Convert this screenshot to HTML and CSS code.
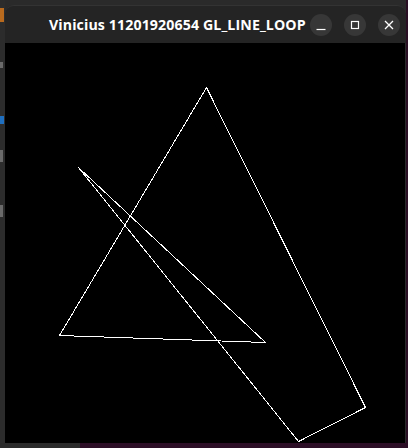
FILE: index.html
```html
<!DOCTYPE html>
<html>
<head>
<meta charset="utf-8">
<link rel="stylesheet" href="styles.css">
</head>
<body>
<div class="desktop">
  <div class="side-left">
    <div class="tab-orange"></div>
    <div class="glyph g1"></div>
    <div class="glyph g2"></div>
    <div class="glyph g3"></div>
    <div class="glyph g4"></div>
  </div>
  <div class="window">
    <div class="titlebar">
      <div class="title">Vinicius 11201920654 GL_LINE_LOOP</div>
      <div class="controls">
        <div class="btn"><svg width="22" height="22" viewBox="0 0 22 22"><path d="M6.5 15.5h9" stroke="#fff" stroke-width="1.2"/></svg></div>
        <div class="btn"><svg width="22" height="22" viewBox="0 0 22 22"><rect x="7.5" y="7.5" width="7" height="7" fill="none" stroke="#fff" stroke-width="1.2"/></svg></div>
        <div class="btn"><svg width="22" height="22" viewBox="0 0 22 22"><path d="M7 7l8 8M15 7l-8 8" stroke="#fff" stroke-width="1.3"/></svg></div>
      </div>
    </div>
    <div class="canvas">
      <svg width="400" height="400" viewBox="0 0 400 400" shape-rendering="crispEdges">
        <polygon points="201.5,44.5 360.5,364.5 293.5,398.5 73.5,124.5 260.5,299.5 54.5,292.5" fill="none" stroke="#fff" stroke-width="1"/>
      </svg>
    </div>
  </div>
  <div class="side-right"></div>
</div>
<div class="bottom-strip">
  <div class="bottom-grey"></div>
  <div class="bottom-purple"></div>
</div>
</body>
</html>
```
FILE: styles.css
```css
html, body {
  margin: 0;
  padding: 0;
  background: #2a2a2a;
  width: 408px;
  height: 448px;
  overflow: hidden;
}
.desktop {
  display: flex;
  height: 443px;
}
.side-left {
  width: 5px;
  background: #2c2c2c;
  position: relative;
}
.tab-orange {
  position: absolute;
  left: 0;
  top: 8px;
  width: 4px;
  height: 14px;
  background: #b86a1e;
}
.glyph {
  position: absolute;
  left: 0;
  width: 3px;
  background: #6a6a6a;
}
.g1 { top: 62px; height: 6px; }
.g2 { top: 116px; height: 8px; background: #1f6fc0; width: 4px; }
.g3 { top: 150px; height: 12px; }
.g4 { top: 205px; height: 12px; }
.window {
  width: 401px;
  display: flex;
  flex-direction: column;
  margin-top: 5px;
}
.titlebar {
  height: 38px;
  background: #242424;
  border-radius: 9px 9px 0 0;
  border-top: 1px solid #333;
  box-sizing: border-box;
  display: flex;
  align-items: center;
  justify-content: space-between;
  padding: 0 6px 0 44px;
}
.title {
  color: #ffffff;
  font-family: "Open Sans", "Noto Sans", sans-serif;
  font-weight: 700;
  font-size: 14.2px;
  letter-spacing: 0.1px;
}
.controls {
  display: flex;
  gap: 12px;
}
.btn {
  width: 22px;
  height: 22px;
  border-radius: 50%;
  background: #373737;
  display: flex;
}
.canvas {
  width: 400px;
  height: 400px;
  background: #000;
}
.canvas svg {
  display: block;
}
.side-right {
  width: 2px;
  background: #2a0f24;
}
.bottom-strip {
  display: flex;
  height: 5px;
}
.bottom-grey {
  width: 80px;
  background: #2b2b2b;
}
.bottom-purple {
  flex: 1;
  background: #2c0e26;
}
```
